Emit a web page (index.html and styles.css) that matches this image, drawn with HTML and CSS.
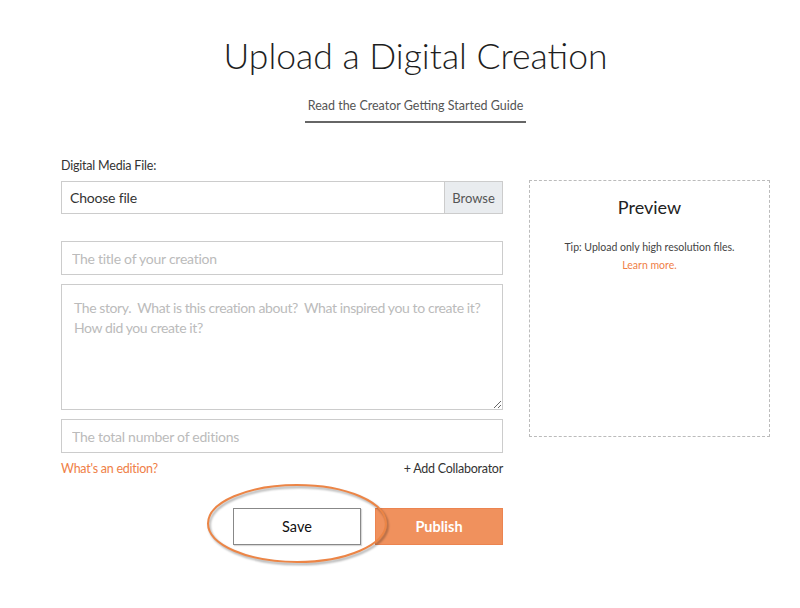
FILE: index.html
```html
<!DOCTYPE html>
<html lang="en">
<head>
<meta charset="utf-8">
<title>Upload a Digital Creation</title>
<link rel="stylesheet" href="styles.css">
</head>
<body>
<main class="page">
  <header class="head">
    <h1 class="title">Upload a Digital Creation</h1>
    <a class="guide" href="#">Read the Creator Getting Started Guide</a>
  </header>
  <div class="cols">
    <form class="form">
      <label class="label">Digital Media File:</label>
      <div class="file">
        <span class="file-text">Choose file</span>
        <span class="browse">Browse</span>
      </div>
      <input class="field title-field" type="text" placeholder="The title of your creation">
      <textarea class="field story" placeholder="The story.  What is this creation about?  What inspired you to create it?  How did you create it?"></textarea>
      <input class="field editions" type="text" placeholder="The total number of editions">
      <div class="links">
        <a class="orange" href="#">What's an edition?</a>
        <a class="add" href="#">+ Add Collaborator</a>
      </div>
      <div class="actions">
        <button type="button" class="btn save">Save</button>
        <button type="button" class="btn publish">Publish</button>
        <svg class="ring" width="186" height="86" viewBox="0 0 186 86" aria-hidden="true">
          <defs>
            <filter id="blur" x="-10%" y="-10%" width="120%" height="130%">
              <feGaussianBlur stdDeviation="1.2"/>
            </filter>
          </defs>
          <ellipse cx="92.5" cy="42.5" rx="89" ry="38.5" fill="none" stroke="rgba(0,0,0,0.35)" stroke-width="2" filter="url(#blur)"/>
          <ellipse cx="91" cy="40.5" rx="89" ry="38.5" fill="none" stroke="#ec8546" stroke-width="2"/>
        </svg>
      </div>
    </form>
    <aside class="preview">
      <h2 class="preview-title">Preview</h2>
      <p class="tip">Tip: Upload only high resolution files.</p>
      <a class="orange small" href="#">Learn more.</a>
    </aside>
  </div>
</main>
</body>
</html>
```
FILE: styles.css
```css
* { box-sizing: border-box; }
html, body { margin: 0; padding: 0; background: #fff; }
body {
  font-family: "Lato", "Liberation Sans", sans-serif;
  color: #333;
}
.page {
  width: 709px;
  margin-left: 61px;
  padding-bottom: 60px;
}
.head {
  display: flex;
  flex-direction: column;
  align-items: center;
  padding-top: 33px;
}
.title {
  margin: 0;
  font-weight: 300;
  font-size: 35.5px;
  line-height: 46px;
  color: #1e1e1e;
}
.guide {
  margin-top: 18px;
  font-size: 12.5px;
  line-height: 18px;
  color: #555;
  text-decoration: none;
  padding: 0 3px 6px;
  border-bottom: 2px solid #666;
}
.cols {
  display: flex;
  gap: 26px;
  margin-top: 34px;
  align-items: flex-start;
}
.form {
  width: 442px;
  display: flex;
  flex-direction: column;
}
.label {
  font-size: 12.5px;
  letter-spacing: -0.2px;
  line-height: 18px;
  color: #333;
}
.file {
  margin-top: 6px;
  height: 33px;
  border: 1px solid #ccc;
  display: flex;
  align-items: stretch;
}
.file-text {
  flex: 1;
  display: flex;
  align-items: center;
  padding-left: 8px;
  font-size: 14px;
  letter-spacing: -0.2px;
  color: #333;
}
.browse {
  width: 58px;
  display: flex;
  align-items: center;
  justify-content: center;
  background: #e9ecef;
  border-left: 1px solid #ccc;
  font-size: 13px;
  color: #555;
}
.field {
  font-family: inherit;
  font-size: 14px;
  letter-spacing: -0.25px;
  color: #333;
  border: 1px solid #ccc;
  border-radius: 0;
  padding: 0 10px;
  height: 34px;
  width: 100%;
  outline: none;
}
.field::placeholder { color: #bbb; }
.title-field { margin-top: 27px; }
.story {
  height: 126px;
  padding: 13px 8px 10px 12px;
  line-height: 20px;
  letter-spacing: -0.4px;
  resize: vertical;
  margin-top: 9px;
}
.editions { margin-top: 9px; }
.links {
  display: flex;
  justify-content: space-between;
  margin-top: 7px;
  font-size: 12.5px;
  letter-spacing: -0.25px;
  line-height: 18px;
}
.orange { color: #ef8047; text-decoration: none; }
.add { color: #333; text-decoration: none; }
.actions {
  display: flex;
  justify-content: flex-end;
  gap: 14px;
  margin-top: 30px;
  position: relative;
}
.btn {
  width: 128px;
  height: 37px;
  font-family: inherit;
  font-size: 14.5px;
  border-radius: 0;
  cursor: pointer;
}
.save {
  background: #fff;
  border: 1px solid #888;
  color: #111;
  box-shadow: 1px 1px 1px rgba(0,0,0,0.15);
}
.publish {
  background: #f0915d;
  border: 1px solid #ec8450;
  color: #fff;
  font-weight: 700;
}
.ring {
  position: absolute;
  left: 145px;
  top: -25px;
  pointer-events: none;
  overflow: visible;
}
.preview {
  width: 241px;
  height: 257px;
  margin-top: 23px;
  border: 1px dashed #bbb;
  display: flex;
  flex-direction: column;
  align-items: center;
  padding-top: 15px;
}
.preview-title {
  margin: 0;
  font-weight: 400;
  font-size: 18px;
  line-height: 22px;
  color: #222;
}
.tip {
  margin: 22px 0 0;
  font-size: 10.5px;
  line-height: 14px;
  color: #444;
}
.small { font-size: 10.5px; line-height: 14px; margin-top: 4px; }
```
